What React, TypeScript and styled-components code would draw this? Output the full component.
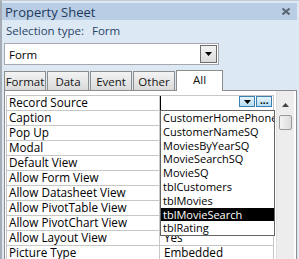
import styled, { createGlobalStyle } from "styled-components"

const Global = createGlobalStyle`
  html, body { margin: 0; padding: 0; background: #fff; }
  body { font-family: "Open Sans", "Noto Sans", sans-serif; font-size: 11px; color: #000; }
`

const rows = [
  ["Record Source", ""],
  ["Caption", ""],
  ["Pop Up", ""],
  ["Modal", ""],
  ["Default View", ""],
  ["Allow Form View", ""],
  ["Allow Datasheet View", ""],
  ["Allow PivotTable View", ""],
  ["Allow PivotChart View", ""],
  ["Allow Layout View", "Yes"],
  ["Picture Type", "Embedded"],
]

const sources = [
  "CustomerHomePhone",
  "CustomerNameSQ",
  "MoviesByYearSQ",
  "MovieSearchSQ",
  "MovieSQ",
  "tblCustomers",
  "tblMovies",
  "tblMovieSearch",
  "tblRating",
]

const tabs = ["Format", "Data", "Event", "Other"]

function DownArrow() {
  return (
    <svg width="7" height="4" viewBox="0 0 7 4">
      <path d="M0 0h7L3.5 4z" fill="#000" />
    </svg>
  )
}

export default function App() {
  return (
    <>
      <Global />
      <Sheet>
        <TitleBar>
          <span>Property Sheet</span>
          <svg width="8" height="7" viewBox="0 0 8 7">
            <path d="M0.5 0.5l7 6M7.5 0.5l-7 6" stroke="#5a6675" strokeWidth="2" />
          </svg>
        </TitleBar>
        <Selection>
          Selection type:<b>Form</b>
        </Selection>
        <Combo>
          <span>Form</span>
          <ComboButton>
            <DownArrow />
          </ComboButton>
        </Combo>
        <TabRow>
          {tabs.map(t => (
            <Tab key={t}>{t}</Tab>
          ))}
          <ActiveTab>All</ActiveTab>
        </TabRow>
        <Content>
          <Grid>
            {rows.map(([label, value], i) => (
              <Row key={label}>
                <Label>{label}</Label>
                <Value $first={i === 0}>
                  {value}
                  {i === 0 && (
                    <CellButtons>
                      <SmallButton>
                        <DownArrow />
                      </SmallButton>
                      <SmallButton>
                        <Dots>...</Dots>
                      </SmallButton>
                    </CellButtons>
                  )}
                </Value>
              </Row>
            ))}
            <List>
              {sources.map(s => (
                <Item key={s} $selected={s === "tblMovieSearch"}>
                  {s}
                </Item>
              ))}
            </List>
          </Grid>
          <ScrollBar>
            <ScrollArrow>
              <svg width="7" height="4" viewBox="0 0 7 4">
                <path d="M0 4h7L3.5 0z" fill="#444" />
              </svg>
            </ScrollArrow>
            <Thumb />
          </ScrollBar>
        </Content>
      </Sheet>
    </>
  )
}

const Sheet = styled.div`
  width: 299px;
  height: 259px;
  box-sizing: border-box;
  background: #dde8f5;
  border-left: 2px solid #a5acb5;
  border-top: 1px solid #c6ccd4;
  padding-top: 2px;
  overflow: hidden;
  display: flex;
  flex-direction: column;
`

const TitleBar = styled.div`
  height: 17px;
  flex-shrink: 0;
  background: #b9cde5;
  display: flex;
  align-items: center;
  justify-content: space-between;
  padding: 0 7px 0 3px;
  margin-right: 2px;
  font-size: 13px;
  color: #223b5a;
`

const Selection = styled.div`
  height: 18px;
  flex-shrink: 0;
  display: flex;
  align-items: center;
  padding: 1px 0 0 4px;
  font-size: 11.5px;
  color: #2a4466;
  b {
    font-weight: normal;
    margin-left: 8px;
  }
`

const Combo = styled.div`
  margin: 4px 0 0 2px;
  width: 215px;
  height: 22px;
  flex-shrink: 0;
  box-sizing: border-box;
  background: #fff;
  border: 1px solid #a6aab0;
  display: flex;
  align-items: center;
  justify-content: space-between;
  padding: 1px 1px 1px 4px;
  font-size: 11.5px;
`

const ComboButton = styled.div`
  width: 17px;
  height: 18px;
  box-sizing: border-box;
  border: 1px solid #6d6d6d;
  background: linear-gradient(#f2f2f2, #dcdcdc);
  display: flex;
  align-items: center;
  justify-content: center;
`

const TabRow = styled.div`
  margin: 5px 0 0 2px;
  height: 20px;
  flex-shrink: 0;
  display: flex;
  align-items: flex-end;
`

const Tab = styled.div`
  width: 42px;
  height: 19px;
  box-sizing: border-box;
  margin-right: 1px;
  border: 1px solid #8d8d8d;
  border-bottom: none;
  background: linear-gradient(#f3f3f3, #dadada);
  display: flex;
  align-items: center;
  justify-content: center;
  font-size: 11.5px;
  color: #141414;
`

const ActiveTab = styled(Tab)`
  width: 47px;
  height: 21px;
  margin-right: 0;
  margin-bottom: -1px;
  background: #fff;
  align-items: flex-start;
  padding-top: 1px;
  position: relative;
`

const Content = styled.div`
  flex: 1;
  margin: 0 2px 0 2px;
  background: #fff;
  border: 1px solid #8d8d8d;
  border-bottom: none;
  display: flex;
  padding: 4px 2px 0 1px;
`

const Grid = styled.div`
  position: relative;
  width: 271px;
  border-left: 1px solid #c7c7c7;
  border-top: 1px solid #c7c7c7;
  align-self: flex-start;
`

const Row = styled.div`
  display: grid;
  grid-template-columns: 153px 1fr;
  height: 15px;
  border-bottom: 1px solid #c7c7c7;
  box-sizing: border-box;
  font-size: 11.7px;
`

const Label = styled.div`
  padding-left: 2px;
  line-height: 13px;
  border-right: 1px solid #c7c7c7;
  white-space: nowrap;
`

const Value = styled.div<{ $first?: boolean }>`
  position: relative;
  padding-left: 4px;
  line-height: 13px;
  border-right: 1px solid #c7c7c7;
  border-left: ${p => (p.$first ? "1px solid #000" : "none")};
`

const CellButtons = styled.div`
  position: absolute;
  right: 1px;
  top: 0;
  display: flex;
  gap: 1px;
`

const SmallButton = styled.div`
  width: 16px;
  height: 11px;
  box-sizing: border-box;
  border: 1px solid #3c7fb1;
  background: linear-gradient(#e5f4fc, #b5dcf4);
  display: flex;
  align-items: center;
  justify-content: center;
`

const Dots = styled.span`
  font-size: 10px;
  font-weight: bold;
  line-height: 6px;
  margin-top: -4px;
  color: #000;
`

const List = styled.div`
  position: absolute;
  left: 153px;
  top: 14px;
  width: 115px;
  box-sizing: border-box;
  background: #fff;
  border: 1px solid #646464;
  overflow: hidden;
`

const Item = styled.div<{ $selected?: boolean }>`
  height: 13.8px;
  line-height: 13.8px;
  padding-left: 2px;
  white-space: nowrap;
  background: ${p => (p.$selected ? "#000" : "#fff")};
  color: ${p => (p.$selected ? "#fff" : "#000")};
`

const ScrollBar = styled.div`
  width: 17px;
  margin-left: 2px;
  margin-top: -4px;
  background: #ededed;
  border-left: 1px solid #e2e2e2;
  display: flex;
  flex-direction: column;
  align-items: center;
`

const ScrollArrow = styled.div`
  height: 24px;
  padding-top: 3px;
  box-sizing: border-box;
  display: flex;
  align-items: center;
  justify-content: center;
`

const Thumb = styled.div`
  width: 13px;
  height: 15px;
  box-sizing: border-box;
  border: 1px solid #9a9a9a;
  border-radius: 2px;
  background: linear-gradient(90deg, #f4f4f4, #dcdcdc);
`
